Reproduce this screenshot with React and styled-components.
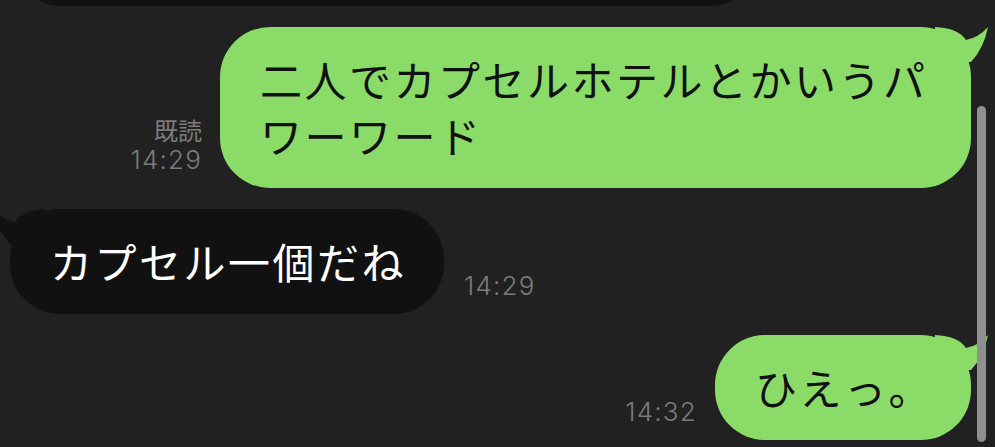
import React from "react";
import styled, { createGlobalStyle } from "styled-components";

const Global = createGlobalStyle`
  html, body { margin: 0; padding: 0; background: #212121; }
  #root { width: 995px; }
`;

const Screen = styled.div`
  position: relative;
  width: 995px;
  height: 447px;
  overflow: hidden;
  background: #212121;
  font-family: "Noto Sans CJK JP", "Noto Sans", sans-serif;
`;

const List = styled.div`
  display: flex;
  flex-direction: column;
  gap: 21px;
  margin-top: -98px;
  padding: 0 24px 0 10px;
`;

const Row = styled.div`
  display: flex;
  align-items: flex-end;
  justify-content: ${(p) => (p.$out ? "flex-end" : "flex-start")};
  gap: ${(p) => (p.$out ? "18px" : "20px")};
`;

const Bubble = styled.div`
  position: relative;
  box-sizing: border-box;
  max-width: 751px;
  padding: 24px 38px 25px 40px;
  border-radius: 50px;
  background: ${(p) => (p.$out ? "#8bdb69" : "#111111")};
  color: ${(p) => (p.$out ? "#111111" : "#ffffff")};
  font-size: 42px;
  line-height: 56px;
  letter-spacing: 2.5px;
`;

const EarlierBubble = styled(Bubble)`
  width: 758px;
  height: 104px;
  border-radius: 52px;
`;

const TailSvg = styled.svg`
  position: absolute;
  top: -2px;
  ${(p) => (p.$out ? "right: -21px;" : "left: -21px; transform: scaleX(-1);")}
  width: 62px;
  height: 40px;
  overflow: visible;
`;

const Meta = styled.div`
  display: flex;
  flex-direction: column;
  align-items: ${(p) => (p.$out ? "flex-end" : "flex-start")};
  padding-bottom: 13px;
  color: #7b7b7b;
`;

const ReadLabel = styled.span`
  font-family: "Noto Sans CJK JP", sans-serif;
  font-size: 24px;
  line-height: 31px;
`;

const Time = styled.span`
  font-family: Inter, "Liberation Sans", sans-serif;
  font-size: 26px;
  font-weight: 300;
  line-height: 30px;
  letter-spacing: 1.2px;
`;

const Scrollbar = styled.div`
  position: absolute;
  right: 9px;
  top: 106px;
  width: 9px;
  height: 336px;
  border-radius: 5px;
  background: #8f8f8f;
`;

function Tail({ out }) {
  return (
    <TailSvg $out={out} viewBox="0 0 62 40" aria-hidden="true">
      <path
        d="M5 2 Q28 3 36 15 Q48 13 58 2 Q54 23 41 37 L5 37 Z"
        fill={out ? "#8bdb69" : "#111111"}
      />
    </TailSvg>
  );
}

function Message({ out, text, read, time }) {
  const bubble = (
    <Bubble $out={out}>
      <Tail out={out} />
      {text}
    </Bubble>
  );
  const meta = (
    <Meta $out={out}>
      {read && <ReadLabel>既読</ReadLabel>}
      <Time>{time}</Time>
    </Meta>
  );
  return (
    <Row $out={out}>
      {out ? meta : bubble}
      {out ? bubble : meta}
    </Row>
  );
}

export default function App() {
  return (
    <>
      <Global />
      <Screen>
        <List>
          <Row>
            <EarlierBubble />
          </Row>
          <Message out text="二人でカプセルホテルとかいうパワーワード" read time="14:29" />
          <Message text="カプセル一個だね" time="14:29" />
          <Message out text="ひえっ。" time="14:32" />
        </List>
        <Scrollbar />
      </Screen>
    </>
  );
}
